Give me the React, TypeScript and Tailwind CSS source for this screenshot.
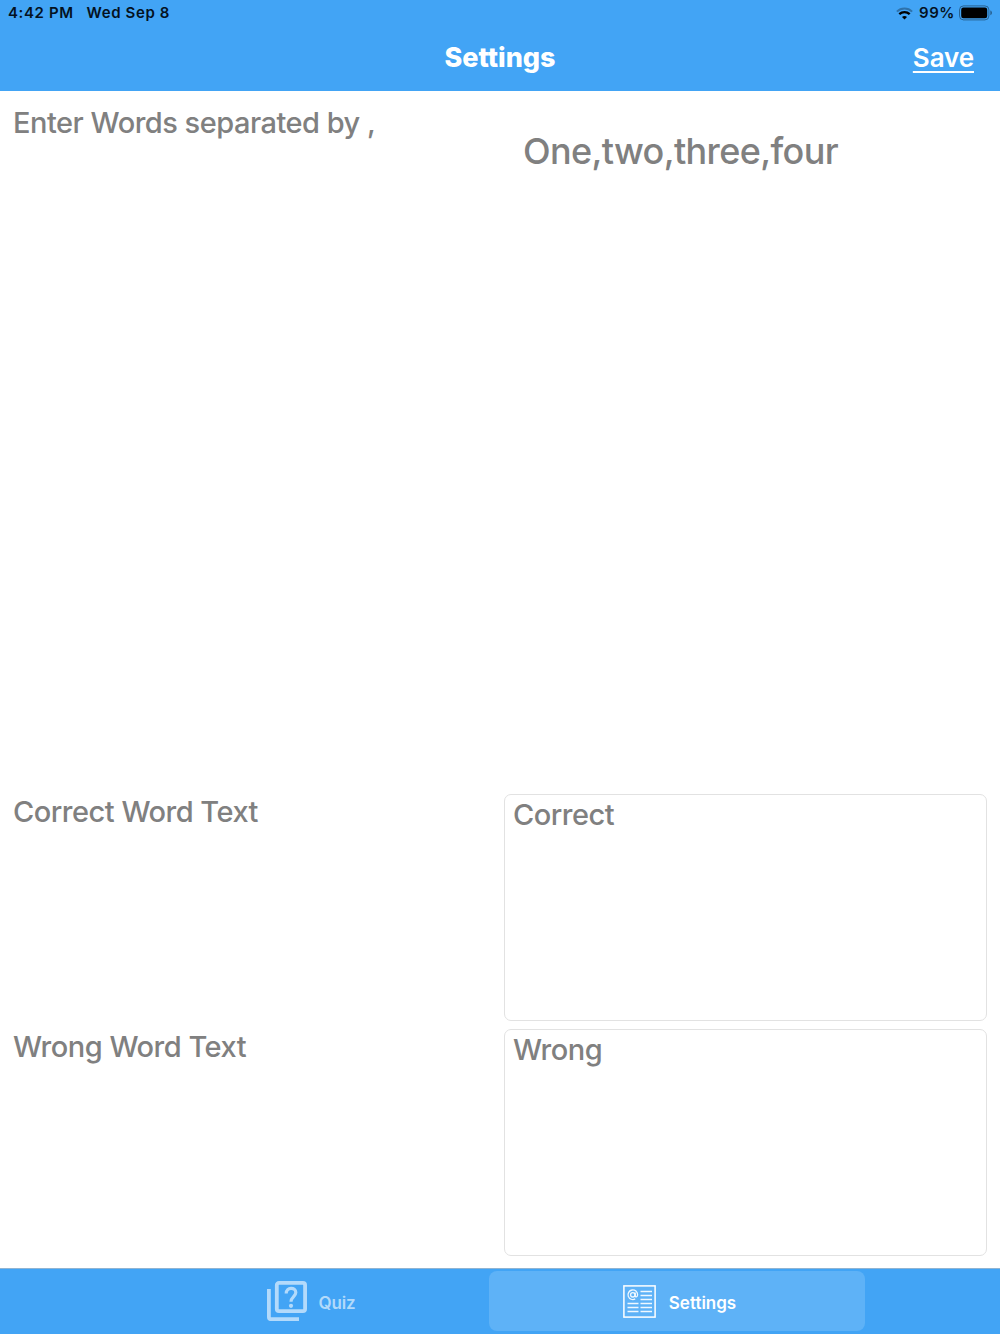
import { useState } from 'react';

interface SettingRow {
  label: string;
  value: string;
}

const feedbackRows: SettingRow[] = [
  { label: 'Correct Word Text', value: 'Correct' },
  { label: 'Wrong Word Text', value: 'Wrong' },
];

function WifiIcon() {
  return (
    <svg width="17" height="13" viewBox="0 0 17 13" fill="none" stroke="#000" strokeWidth="2">
      <path d="M0.9 4.6C5 0.4 12 0.4 16.1 4.6" strokeOpacity="0.3" />
      <path d="M3.3 7.2C6.2 4.5 10.8 4.5 13.7 7.2" strokeWidth="2.3" />
      <path d="M6 10C7.4 8.7 9.6 8.7 11 10L8.5 12.6Z" fill="#000" stroke="none" />
    </svg>
  );
}

function BatteryIcon() {
  return (
    <svg width="34" height="16" viewBox="0 0 34 16">
      <rect x="0.5" y="0.9" width="29.4" height="14" rx="4" fill="none" stroke="#000" strokeOpacity="0.4" />
      <rect x="2.2" y="2.6" width="26" height="10.6" rx="2.2" fill="#000" />
      <path d="M31.4 5.6C33.4 6.2 33.4 9.6 31.4 10.2Z" fill="#000" fillOpacity="0.45" />
    </svg>
  );
}

function QuizIcon() {
  return (
    <svg width="40" height="40" viewBox="0 0 40 40" fill="none" stroke="currentColor" strokeWidth="3.8">
      <rect x="9.8" y="1.9" width="28.3" height="28.3" rx="2.2" />
      <path d="M1.9 8V36a2.2 2.2 0 0 0 2.2 2.2H32" />
      <path d="M19.2 12.6C19.2 5.8 28.8 5.8 28.8 11.6C28.8 15.4 24 16 24 20.8" strokeWidth="3.2" />
      <circle cx="24" cy="24.8" r="2.1" fill="currentColor" stroke="none" />
    </svg>
  );
}

function NewsIcon() {
  return (
    <svg width="33" height="33" viewBox="0 0 33 33" fill="none" stroke="#fff">
      <rect x="0.9" y="0.9" width="31.2" height="31.2" strokeWidth="1.5" />
      <g strokeWidth="1.3" strokeOpacity="0.9">
        <path d="M17.5 6.5h11.5M17.5 10.5h11.5M17.5 14.5h11.5M17.5 18.5h11.5M17.5 22.5h11.5M17.5 26.5h11.5" />
        <path d="M4.5 18.5h11M4.5 22.5h11M4.5 26.5h11" />
        <circle cx="9.8" cy="9.8" r="2.2" />
        <path d="M12.2 7.4v3.2c0 2 2.4 1.6 2.4-0.8a4.8 4.8 0 1 0-2.4 4.1" />
      </g>
    </svg>
  );
}

export default function App() {
  const [tab, setTab] = useState<'quiz' | 'settings'>('settings');

  return (
    <div className="flex h-[1334px] w-[1000px] flex-col bg-white font-['Inter',sans-serif] text-[#808080]">
      {/* Status bar + title */}
      <header className="h-[91px] bg-[#42a4f5]">
        <div className="flex h-[26px] items-center justify-between pl-2 pr-[7px] text-[15px] font-semibold leading-none text-[#04121f]">
          <div className="flex gap-[13px] pb-px tracking-[0.6px]">
            <span>4:42 PM</span>
            <span>Wed Sep 8</span>
          </div>
          <div className="flex items-center">
            <WifiIcon />
            <span className="mb-px ml-[6px] mr-1 tracking-[0.6px]">99%</span>
            <BatteryIcon />
          </div>
        </div>
        <div className="grid h-[63px] grid-cols-3 items-center text-white">
          <span />
          <h1 className="text-center text-[27px] font-extrabold leading-none">Settings</h1>
          <button className="justify-self-end pr-[26px] text-[26px] font-semibold leading-none tracking-[-0.1px] underline decoration-2 underline-offset-4">
            Save
          </button>
        </div>
      </header>

      {/* Form */}
      <main className="flex h-[1177px] flex-col gap-2 px-[13px] pt-2 text-[29px] font-[550] leading-[35px] tracking-[-0.5px]">
        <div className="flex h-[687px]">
          <div className="w-[491px] pt-[6px]">Enter Words separated by ,</div>
          <div className="pl-[19px] pt-[30px] text-[36px] leading-[44px] tracking-[-0.64px]">One,two,three,four</div>
        </div>
        {feedbackRows.map((row) => (
          <div key={row.label} className="flex h-[227px]">
            <div className="w-[491px]">{row.label}</div>
            <div className="flex-1 rounded-[7px] border border-[#e2e2e2] px-[8px] pt-[2px]">{row.value}</div>
          </div>
        ))}
      </main>

      {/* Tab bar */}
      <nav className="flex h-[66px] justify-center border-t border-[#8fb4d3] bg-[#42a4f5] pr-[12px] pt-[2px] text-[17px] leading-none text-white">
        <button
          onClick={() => setTab('quiz')}
          className={`mr-[-10px] flex h-[60px] w-[376px] items-center justify-center gap-3 font-semibold tracking-[-0.2px] ${
            tab === 'quiz' ? 'rounded-lg bg-[#5eb2f7]' : 'text-white/60'
          }`}
        >
          <QuizIcon />
          <span className="pt-1">Quiz</span>
        </button>
        <button
          onClick={() => setTab('settings')}
          className={`flex h-[60px] w-[376px] items-center justify-center gap-[13px] pl-[5px] font-semibold ${
            tab === 'settings' ? 'rounded-lg bg-[#5eb2f7]' : 'text-white/60'
          }`}
        >
          <NewsIcon />
          <span className="pt-1">Settings</span>
        </button>
      </nav>
    </div>
  );
}
